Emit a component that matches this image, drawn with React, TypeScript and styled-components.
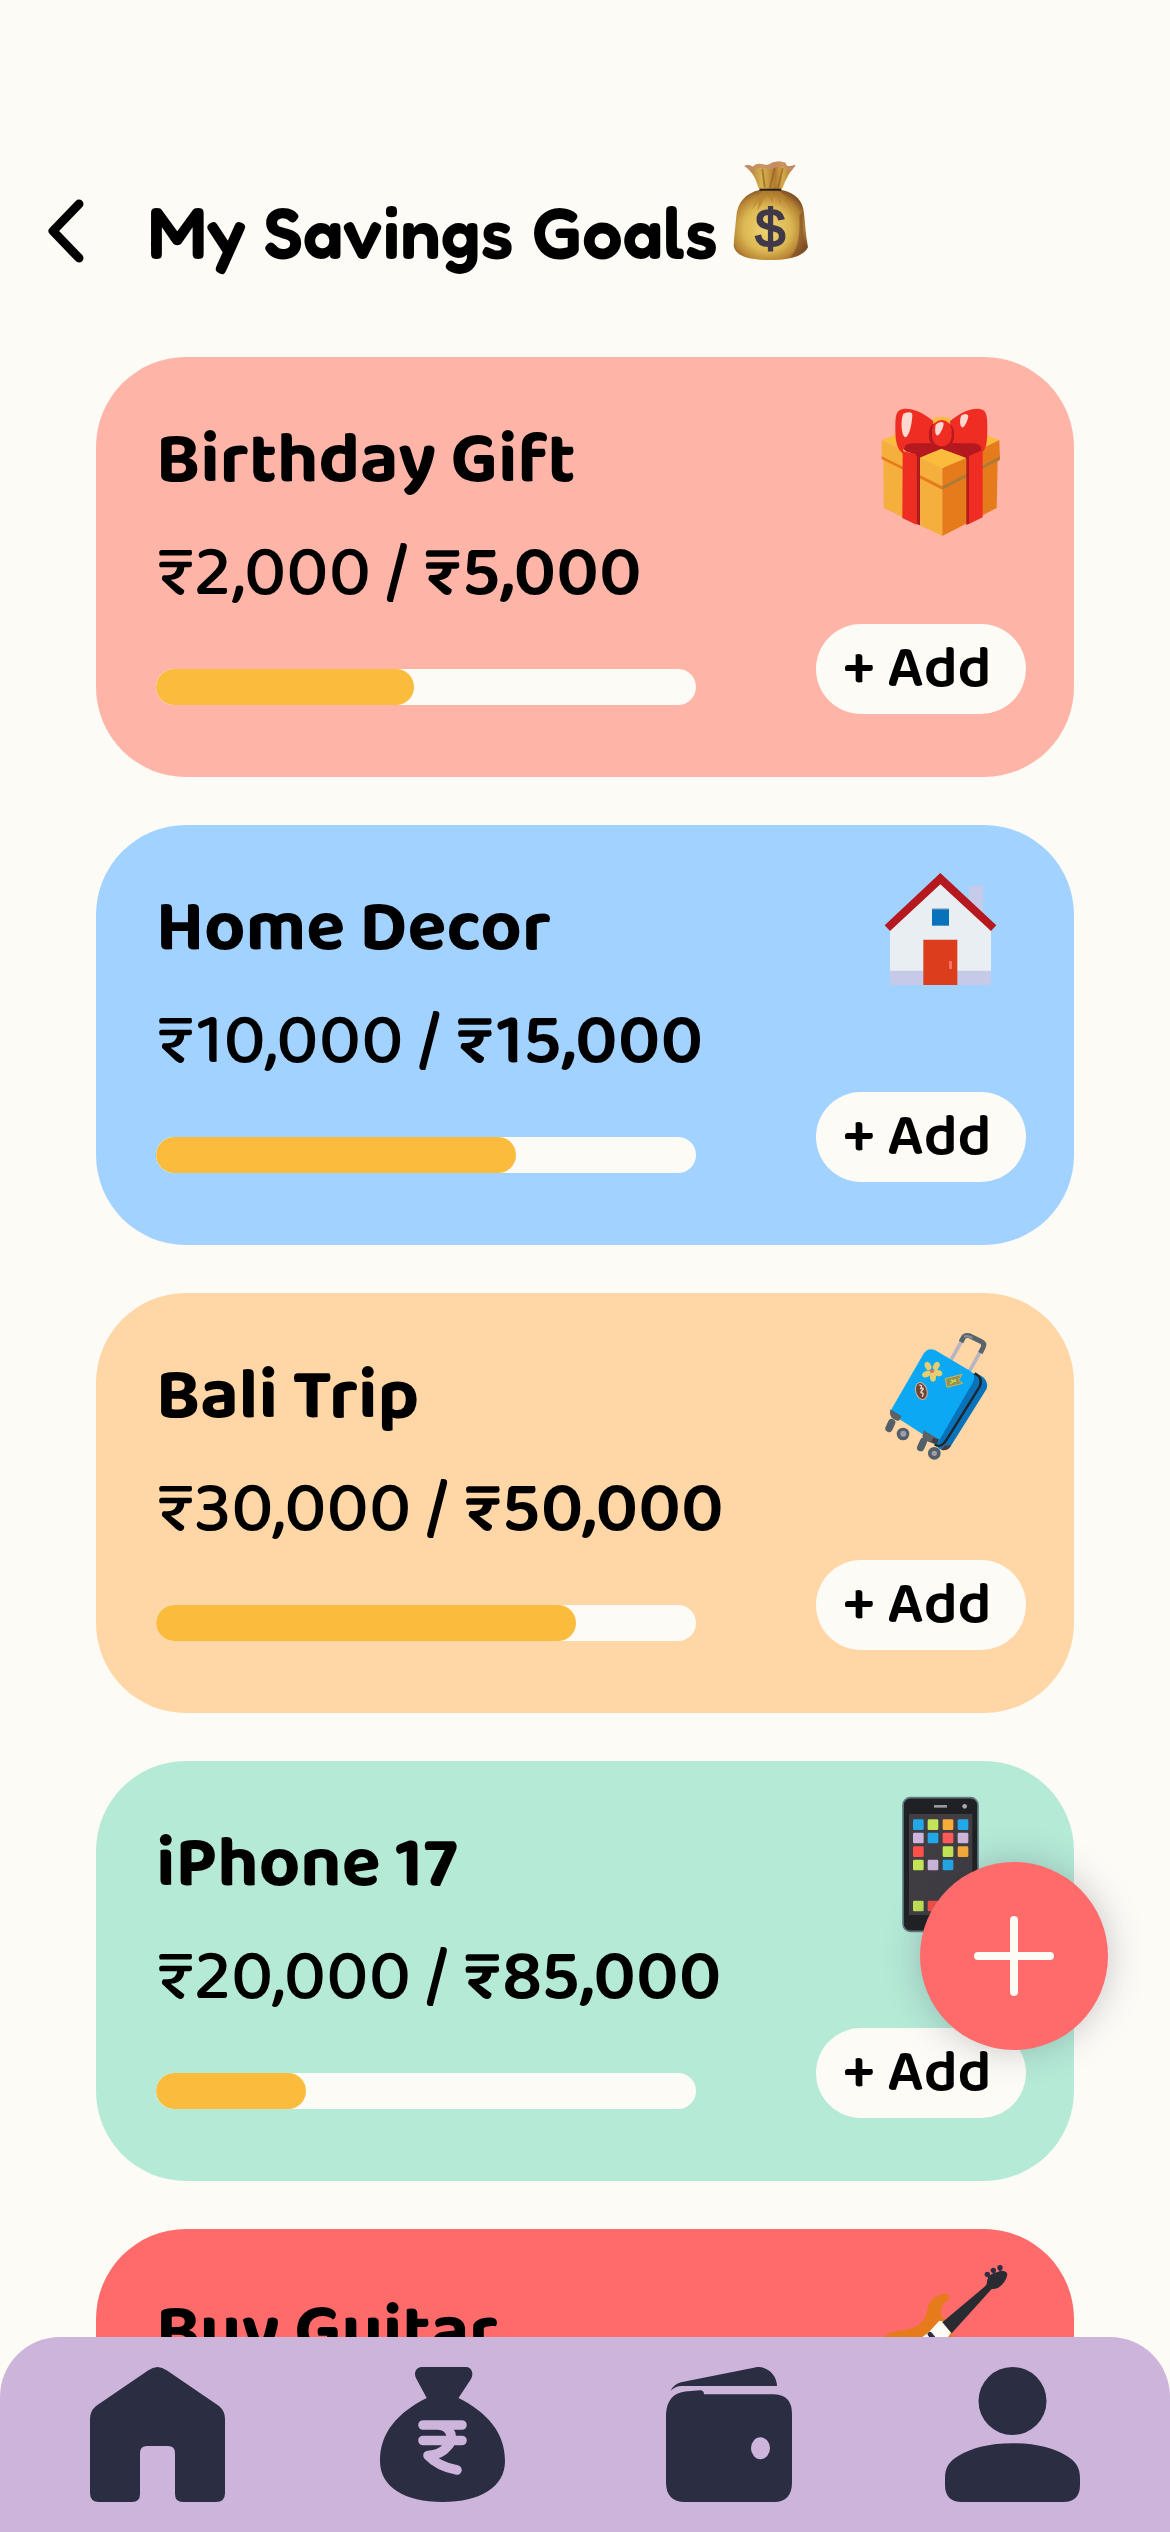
import React from "react";
import styled, { createGlobalStyle } from "styled-components";

const ink = "#2b2d42";
const paper = "#fdfbf6";
const coral = "#ff6b6b";
const lavender = "#ccb4db";

const GlobalStyle = createGlobalStyle`
  * { box-sizing: border-box; }
  body { margin: 0; background: ${paper}; }
  button { border: 0; padding: 0; font: inherit; color: inherit; cursor: pointer; }
  svg { display: block; }
`;

const Screen = styled.div`
  position: relative;
  display: flex;
  flex-direction: column;
  height: 100vh;
  background: ${paper};
  color: #000;
  font-family: "Baloo 2", "Open Sans", "Noto Sans", sans-serif;
`;

const Content = styled.main`
  flex: 1;
  min-height: 0;
  overflow-y: auto;
  scrollbar-width: none;
`;

const Header = styled.header`
  display: flex;
  align-items: flex-end;
  padding: 160px 48px 85px 36px;
`;

const BackButton = styled.button`
  padding: 8px 52px 9px 8px;
  background: none;
`;

const PageTitle = styled.h1`
  margin: 0 14px 0 0;
  font-family: "Fredoka", "Open Sans", "Noto Sans", sans-serif;
  font-size: 72px;
  line-height: 80px;
  font-weight: 600;
  white-space: nowrap;
`;

const TitleArt = styled.span`
  padding-bottom: 10px;
`;

const GoalList = styled.ul`
  display: flex;
  flex-direction: column;
  gap: 48px;
  margin: 0;
  padding: 0 96px 48px;
  list-style: none;
`;

const GoalCard = styled.li<{ $tone: string }>`
  display: flex;
  gap: 120px;
  height: 420px;
  padding: 0 48px 0 60px;
  border-radius: 90px;
  background: ${(p) => p.$tone};
`;

const Details = styled.div`
  display: flex;
  flex: 1;
  flex-direction: column;
  min-width: 0;
  padding: 64px 0 72px;
  white-space: nowrap;
`;

const GoalName = styled.h2`
  margin: 0 0 33px;
  font-size: 72px;
  line-height: 80px;
  font-weight: 700;
`;

const Amount = styled.p`
  margin: 0;
  font-size: 72px;
  line-height: 80px;
  font-weight: 500;

  strong { font-weight: 600; }
`;

const Track = styled.div`
  height: 36px;
  margin-top: auto;
  border-radius: 18px;
  background: ${paper};
  overflow: hidden;
`;

const Fill = styled.div`
  height: 100%;
  border-radius: 18px;
  background: #fbbc3d;
`;

const Side = styled.div`
  display: flex;
  flex-direction: column;
  align-items: flex-end;
  justify-content: space-between;
  width: 210px;
  padding: 34px 0 63px;
`;

const ArtFrame = styled.div`
  padding-right: 16px;
`;

const AddButton = styled.button`
  width: 100%;
  height: 90px;
  padding-right: 8px;
  border-radius: 45px;
  background: ${paper};
  font-size: 60px;
  line-height: 80px;
  font-weight: 600;
`;

const Fab = styled.button`
  position: absolute;
  right: 62px;
  bottom: 482px;
  display: grid;
  place-items: center;
  width: 188px;
  height: 188px;
  border-radius: 50%;
  background: ${coral};
  box-shadow: 0 0 36px rgba(43, 45, 66, 0.26);
`;

const NavBar = styled.nav`
  display: flex;
  justify-content: space-between;
  padding: 30px 90px;
  border-radius: 60px 60px 0 0;
  background: ${lavender};
`;

const NavLink = styled.a`
  color: ${ink};
`;

function MoneyBag() {
  return (
    <svg width="78" height="102" viewBox="66 60 234 306" aria-hidden="true">
      <defs>
        <radialGradient id="bagBody" cx="0.45" cy="0.55" r="0.58">
          <stop offset="0" stopColor="#f0d672" />
          <stop offset="0.55" stopColor="#dcb854" />
          <stop offset="0.82" stopColor="#b98635" />
          <stop offset="1" stopColor="#815127" />
        </radialGradient>
        <linearGradient id="bagNeck" x1="0" x2="1">
          <stop offset="0" stopColor="#a86f3b" />
          <stop offset="0.35" stopColor="#d8b450" />
          <stop offset="0.6" stopColor="#b07b30" />
          <stop offset="0.75" stopColor="#d6ac4a" />
          <stop offset="1" stopColor="#935d2d" />
        </linearGradient>
      </defs>
      <path d="M103 77 Q118 74 128 80 Q140 68 158 73 Q174 78 184 69 Q202 60 226 68 L230 77 Q244 79 257 75 Q238 96 226 123 L215 150 H148 L136 117 Q124 91 103 77Z" fill="url(#bagNeck)" />
      <path d="M103 77 Q118 74 128 80 Q140 68 158 73 Q174 78 184 69 Q202 60 226 68 L230 77 Q244 79 257 75 L244 93 Q234 97 226 82 Q207 74 184 89 Q158 80 132 88 L119 91Z" fill="#c98d6c" opacity="0.8" />
      <path d="M148 150 C105 160 82 190 79 228 C76 262 72 292 71 317 C77 350 120 360 180 360 C240 360 282 348 294 322 C287 286 286 255 282 220 C279 181 255 158 215 150Z" fill="url(#bagBody)" />
      <path d="M155 153 Q137 176 126 210 Q136 196 146 181 L142 213 Q158 190 171 156 L187 188 Q191 171 190 155 L214 197 L209 168 Q232 183 243 209 Q235 173 208 153Z" fill="#b7822f" opacity="0.65" />
      <path d="M278 218 Q277 282 288 320 Q272 345 240 353 Q273 321 268 226Z" fill="#794726" opacity="0.55" />
      <path d="M149 149 H213" stroke="#252119" strokeWidth="6" />
      <path d="M157 86 L164 142 M194 85 L180 144 M218 85 L204 145" stroke="#965d25" strokeWidth="6" opacity="0.65" />
      <text x="181" y="320" fontFamily="Liberation Sans, sans-serif" fontSize="162" fill="#40394a" stroke="#40394a" strokeWidth="6" textAnchor="middle">$</text>
    </svg>
  );
}

function GiftArt() {
  return (
    <svg width="140" height="150" viewBox="90 33 420 450" aria-hidden="true">
      <path d="M126 180 L300 112 L478 180 L305 262Z" fill="#fbbc3d" />
      <ellipse cx="305" cy="132" rx="36" ry="22" fill="#fbbc3d" />
      <path d="M125 180 L307 264 V468 L131 384 L130 240 L125 235Z" fill="#f5af3c" />
      <path d="M307 264 L478 180 L480 238 L473 243 L470 384 L307 468Z" fill="#e67b1c" />
      <path d="M125 229 L307 319 V329 L125 237Z" fill="#e67b1c" />
      <path d="M307 319 L480 229 V239 L307 329Z" fill="#ad7b35" />
      <path d="M188 205 L305 170 L428 210 L380 236 L303 206 L240 234Z" fill="#b5181e" />
      <path d="M188 214 L229 222 V434 L187 414Z" fill="#f02d23" />
      <path d="M229 220 L240 228 V436 L229 432Z" fill="#b5181e" />
      <path d="M387 228 L428 210 V412 L387 432Z" fill="#f02d23" />
      <path d="M379 234 L387 228 V431 L379 435Z" fill="#b5181e" />
      <path d="M280 124 C247 96 215 84 189 87 C167 90 166 109 166 145 C166 180 169 207 190 222 Q185 198 213 193 L276 190Z" fill="#f02d23" />
      <path d="M330 124 C364 96 394 84 420 87 C441 90 442 110 442 145 C442 180 440 207 427 216 Q427 197 400 193 L334 190Z" fill="#f02d23" />
      <path d="M192 208 Q192 190 219 190 H401 Q425 194 425 208 Q421 216 402 216 H217 Q199 219 192 208Z" fill="#b5181e" />
      <rect x="267" y="126" width="75" height="76" rx="30" fill="#b5181e" />
      <rect x="276" y="120" width="59" height="79" rx="30" fill="#f02d23" />
      <path d="M190 101 Q217 91 217 105 C216 135 207 169 197 172 C184 170 181 121 190 101ZM287 134 Q299 122 310 128 C315 136 297 171 290 166 Q283 159 287 134ZM363 107 Q379 97 385 107 C383 126 371 145 366 142 Q356 134 363 107Z" fill="#ffd8d0" />
      <path d="M240 233 L304 206 L379 234 L307 264Z" fill="#fbbc3d" />
    </svg>
  );
}

function HouseArt() {
  return (
    <svg width="140" height="150" viewBox="90 27 420 450" aria-hidden="true">
      <rect x="387" y="108" width="42" height="90" fill="#c5cae9" />
      <path d="M150 228 L301 94 L453 228 V405 H150Z" fill="#e9eef3" />
      <path d="M150 362 H453 V405 H150Z" fill="#c5cae9" />
      <path d="M134 226 L301 69 L469 226 L453 243 L301 103 L150 243Z" fill="#b5191f" />
      <path d="M276 175 H327 V227 H276Z" fill="#0873bb" />
      <path d="M276 174 H327 V178 H276Z" fill="#b4b9d8" />
      <path d="M250 269 H352 V405 H250Z" fill="#dc3d1d" />
      <path d="M327 333 H336 V357 H327Z" fill="#ff7065" />
    </svg>
  );
}

function SuitcaseArt() {
  return (
    <svg width="140" height="150" viewBox="90 51 420 450" aria-hidden="true">
      <path d="M334 149 L366 91 M388 184 L421 125" stroke="#b7b5c2" strokeWidth="11" />
      <path d="M363 96 L370 83 Q374 74 388 77 L422 94 Q435 100 430 111 L421 129" fill="none" stroke="#59636b" strokeWidth="15" strokeLinejoin="round" />
      <path d="M372 80 Q382 75 397 84" fill="none" stroke="#898b99" strokeWidth="7" />
      <path d="M376 184 L421 196 Q447 211 440 236 L333 407 Q321 425 300 418 L266 388Z" fill="#0873bb" />
      <path d="M252 129 Q265 111 286 121 L391 183 Q410 196 398 218 L292 401 L150 309 Q152 302 157 293Z" fill="#0ca8f4" />
      <path d="M404 190 Q430 204 419 230 L320 389 Q302 417 284 403" fill="none" stroke="#20252d" strokeWidth="7" />
      <path d="M151 298 L183 317 Q186 324 174 333 Q148 326 150 307ZM251 361 L296 388 L287 402 Q256 396 247 381ZM309 405 H333 Q328 423 305 420Z" fill="#5b6366" />
      <path d="M280 383 L297 388 L291 402 L274 396ZM313 407 L333 405 Q325 423 305 420Z" fill="#443c43" />
      <path d="M155 338 L147 355 M250 395 L242 413" stroke="#536069" strokeWidth="22" strokeLinecap="round" />
      <g fill="#536069"><circle cx="189" cy="372" r="19" /><circle cx="283" cy="430" r="19" /></g>
      <g fill="#a29caa"><circle cx="190" cy="371" r="9" /><circle cx="283" cy="430" r="8" /></g>
      <g fill="#e7cf6e"><ellipse cx="264" cy="168" rx="9" ry="13" transform="rotate(-28 264 168)" /><ellipse cx="289" cy="168" rx="9" ry="13" transform="rotate(28 289 168)" /><ellipse cx="293" cy="189" rx="14" ry="9" transform="rotate(12 293 189)" /><ellipse cx="279" cy="201" rx="9" ry="14" /><ellipse cx="260" cy="192" rx="14" ry="9" transform="rotate(-25 260 192)" /></g>
      <ellipse cx="276" cy="184" rx="7" ry="5" fill="#ff6b5d" />
      <path d="M316 206 L366 193 L356 211 L368 220 L321 232Z" fill="#988f56" stroke="#c9b85a" strokeWidth="3" />
      <path d="M332 210 L349 215 M331 222 L348 208" stroke="#c6df3d" strokeWidth="4" />
      <ellipse cx="244" cy="243" rx="17" ry="26" transform="rotate(-15 244 243)" fill="#6d4436" stroke="#d8b4a0" strokeWidth="3" />
      <path d="M238 225 Q250 225 241 237 Q248 232 250 237 Q238 249 246 249 Q252 248 247 260" fill="none" stroke="#ecd7c6" strokeWidth="4" />
    </svg>
  );
}

const appTiles: [number, number, string][] = [
  [219, 178, "#22a8e8"], [263, 178, "#c3e456"], [308, 178, "#f6ac39"], [353, 178, "#22a8e8"],
  [219, 218, "#ccb4db"], [263, 218, "#22a8e8"], [308, 218, "#ff5a57"], [353, 218, "#ccb4db"],
  [219, 259, "#ff5148"], [308, 259, "#c3e456"], [353, 259, "#f6ac39"],
  [219, 299, "#c3e456"], [263, 299, "#ccb4db"], [308, 299, "#22a8e8"],
  [219, 422, "#c3e456"], [263, 422, "#ff5148"], [308, 422, "#22a8e8"], [353, 422, "#f6ac39"],
];

function PhoneArt() {
  return (
    <svg width="140" height="150" viewBox="90 105 420 450" aria-hidden="true">
      <rect x="189" y="113" width="225" height="401" rx="22" fill="#202124" stroke="#637c82" strokeWidth="5" />
      <path d="M207 162 H397 V465 H207Z" fill="#403e43" />
      <path d="M282 139 H321" stroke="#98979d" strokeWidth="8" />
      <circle cx="374" cy="139" r="7" fill="#aaa8ac" />
      {appTiles.map(([x, y, fill]) => (
        <rect key={`${x}-${y}`} x={x} y={y} width="32" height="32" rx="4" fill={fill} />
      ))}
    </svg>
  );
}

function GuitarArt() {
  return (
    <svg width="140" height="150" viewBox="90 129 420 450" aria-hidden="true">
      <path d="M327 227 C324 218 301 222 286 231 C265 243 264 266 258 285 C249 314 220 327 187 331 C152 334 125 347 112 378 C92 433 128 491 179 515 C230 529 276 496 282 448 C287 406 331 390 337 349 L337 310 L305 292 C299 264 311 248 324 241 Q329 235 327 227Z" fill="#e67b1c" />
      <path d="M306 303 L333 338 L290 401 L213 428 L218 372 L265 338 L297 303Z" fill={paper} />
      <path d="M307 307 L432 202 Q443 192 441 183 Q444 165 462 159 L486 152 Q502 153 502 165 Q496 190 475 203 Q465 208 455 207 L335 340Z" fill="#292b31" />
      <path d="M442 164 L452 182 M459 151 L465 168 M479 144 L482 160" stroke={ink} strokeWidth="6" />
      <g fill={ink}><circle cx="442" cy="163" r="8" /><circle cx="460" cy="151" r="8" /><circle cx="480" cy="143" r="8" /></g>
      <path d="M270 343 L292 369" stroke={ink} strokeWidth="14" strokeLinecap="round" />
    </svg>
  );
}

function HomeIcon() {
  return (
    <svg width="135" height="135" viewBox="0 0 135 135" fill="currentColor" aria-hidden="true">
      <path d="M58 3.5 Q67.5 -3.5 77 3.5 L129 39 Q135 44 135 52 V126 Q135 135 126 135 H93 Q85 135 85 127 V86 Q85 79 78 79 H57 Q50 79 50 86 V127 Q50 135 42 135 H9 Q0 135 0 126 V52 Q0 44 6 39Z" />
    </svg>
  );
}

function SavingsIcon() {
  return (
    <svg width="135" height="135" viewBox="0 0 135 135" aria-hidden="true">
      <path d="M47 0 H91 C97 0 99 7 96 12 L83.5 31 C113 46 130 66 130 94 C130 120 105 135 67.5 135 C30 135 5 120 5 94 C5 66 22 46 51.7 31 L41.5 12 C38 6 41 0 47 0Z" fill="currentColor" />
      <path d="M48 58 H87 M48 73.5 H87 M63 58 C77 59 80 73 72 80 C68 85 61 88 53 88.5 C60 96 71 101 82 103" fill="none" stroke={lavender} strokeWidth="9.6" strokeLinecap="round" strokeLinejoin="round" />
    </svg>
  );
}

function WalletIcon() {
  return (
    <svg width="135" height="135" viewBox="0 0 135 135" fill="currentColor" aria-hidden="true">
      <path d="M10.7 23.7 Q14 17 21 15.3 L95 .5 C107 -2 117 8 117 19 H22 Q15 19 10.7 23.7Z" />
      <path fillRule="evenodd" d="M25 24.5 L40 23.2 Q44 23.2 44 27.3 H114 Q132 28 132 47 V115 Q132 135 114 135 H25 Q6 135 6 115 V47 Q7 27 25 24.5ZM100.5 70.3 A9.5 11 0 1 0 100.5 92.3 A9.5 11 0 1 0 100.5 70.3Z" />
    </svg>
  );
}

function ProfileIcon() {
  return (
    <svg width="135" height="135" viewBox="0 0 135 135" fill="currentColor" aria-hidden="true">
      <circle cx="67.5" cy="34" r="34" />
      <path d="M67.5 76.3 C91 76.3 108 81 121 88.5 C131 94 135 101 135 111 V118 Q135 135 118 135 H17 Q0 135 0 118 V111 C0 101 4 94 14 88.5 C27 81 44 76.3 67.5 76.3Z" />
    </svg>
  );
}

const goals = [
  { name: "Birthday Gift", saved: "₹2,000", target: "₹5,000", percent: 47.8, tone: "#ffb4a8", Art: GiftArt },
  { name: "Home Decor", saved: "₹10,000", target: "₹15,000", percent: 66.7, tone: "#a2d2ff", Art: HouseArt },
  { name: "Bali Trip", saved: "₹30,000", target: "₹50,000", percent: 77.8, tone: "#ffd6a6", Art: SuitcaseArt },
  { name: "iPhone 17", saved: "₹20,000", target: "₹85,000", percent: 27.8, tone: "#b5ead7", Art: PhoneArt },
  { name: "Buy Guitar", saved: "₹5,000", target: "₹20,000", percent: 25, tone: coral, Art: GuitarArt },
];

const tabs = [
  { label: "Home", href: "#home", Icon: HomeIcon },
  { label: "Savings", href: "#savings", Icon: SavingsIcon },
  { label: "Wallet", href: "#wallet", Icon: WalletIcon },
  { label: "Profile", href: "#profile", Icon: ProfileIcon },
];

export default function App() {
  return (
    <>
      <GlobalStyle />
      <Screen>
        <Content>
          <Header>
            <BackButton type="button" aria-label="Back">
              <svg width="52" height="64" viewBox="0 0 52 64" aria-hidden="true">
                <path d="M35 5 L9 32 L35 59" fill="none" stroke="#000" strokeWidth="9" strokeLinecap="round" strokeLinejoin="round" />
              </svg>
            </BackButton>
            <PageTitle>My Savings Goals</PageTitle>
            <TitleArt><MoneyBag /></TitleArt>
          </Header>
          <GoalList>
            {goals.map(({ name, saved, target, percent, tone, Art }) => (
              <GoalCard key={name} $tone={tone}>
                <Details>
                  <GoalName>{name}</GoalName>
                  <Amount>{saved} / <strong>{target}</strong></Amount>
                  <Track role="progressbar" aria-label={name} aria-valuenow={percent} aria-valuemin={0} aria-valuemax={100}>
                    <Fill style={{ width: `${percent}%` }} />
                  </Track>
                </Details>
                <Side>
                  <ArtFrame><Art /></ArtFrame>
                  <AddButton type="button">+ Add</AddButton>
                </Side>
              </GoalCard>
            ))}
          </GoalList>
        </Content>
        <NavBar aria-label="Main">
          {tabs.map(({ label, href, Icon }) => (
            <NavLink key={label} href={href} aria-label={label}><Icon /></NavLink>
          ))}
        </NavBar>
        <Fab type="button" aria-label="New goal">
          <svg width="80" height="80" viewBox="0 0 80 80" aria-hidden="true">
            <path d="M40 4 V76 M4 40 H76" stroke={paper} strokeWidth="8" strokeLinecap="round" />
          </svg>
        </Fab>
      </Screen>
    </>
  );
}
